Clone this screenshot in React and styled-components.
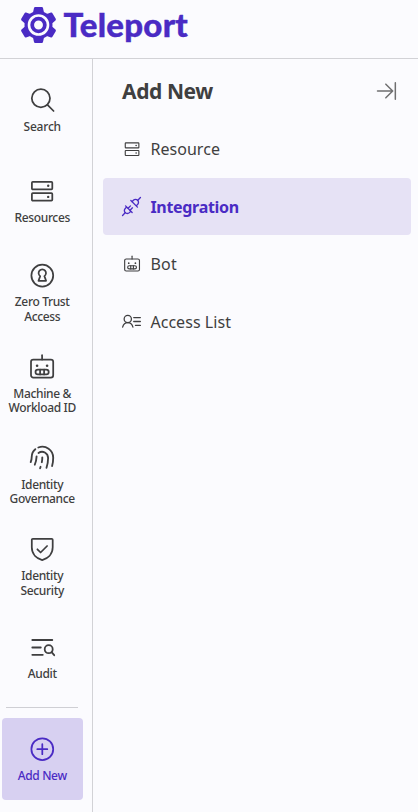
import React from "react";
import styled, { createGlobalStyle } from "styled-components";

const Global = createGlobalStyle`
  * { box-sizing: border-box; }
  body { margin: 0; background: #fbfbfe; color: #3f3f40; font-family: "Noto Sans", "Open Sans", sans-serif; }
`;

const Page = styled.div`
  height: 812px;
  display: flex;
  flex-direction: column;
  overflow: hidden;
`;

const Header = styled.header`
  height: 59px;
  flex: none;
  display: flex;
  align-items: flex-start;
  padding: 7px 0 0 21px;
  gap: 7.5px;
  border-bottom: 1px solid #d2d2d6;
  color: #4a2bc4;
`;

const Wordmark = styled.span`
  margin-top: -1px;
  font-family: Lato, sans-serif;
  font-weight: 900;
  font-size: 33px;
  line-height: 36px;
  letter-spacing: 0.25px;
  -webkit-text-stroke: 0.4px currentColor;
`;

const Body = styled.div`
  flex: 1;
  display: flex;
  min-height: 0;
`;

const Sidebar = styled.nav`
  width: 93px;
  flex: none;
  border-right: 1px solid #d2d2d6;
  padding: 11px 8px 0 2px;
  display: flex;
  flex-direction: column;
`;

const NavItem = styled.a`
  width: 81px;
  height: 82px;
  flex: none;
  margin-bottom: ${(p) => (p.$active ? 0 : "9.3px")};
  border-radius: 4px;
  display: flex;
  flex-direction: column;
  align-items: center;
  padding-top: ${(p) => p.$top ?? 18}px;
  padding-right: 0.6px;
  color: ${(p) => (p.$active ? "#4a2bc4" : "inherit")};
  background: ${(p) => (p.$active ? "#d7d0f1" : "transparent")};
`;

const NavLabel = styled.span`
  margin-top: 7.7px;
  font-size: 12px;
  line-height: 14.4px;
  font-weight: 500;
  letter-spacing: ${(p) => p.$track ?? -0.35}px;
  text-align: center;
  white-space: pre;
`;

const Divider = styled.hr`
  width: 72px;
  height: 1px;
  margin: -2px 0 10px 4px;
  border: 0;
  flex: none;
  background: #cfcfd4;
`;

const Panel = styled.main`
  flex: 1;
  padding: 14px 7px 0 10px;
`;

const PanelHead = styled.div`
  height: 36px;
  margin-bottom: 11px;
  padding: 0 14px 0 19px;
  display: flex;
  align-items: center;
  justify-content: space-between;
`;

const Title = styled.h1`
  margin: 0;
  font-size: 21px;
  line-height: 32px;
  font-weight: 700;
  letter-spacing: -0.4px;
`;

const MenuRow = styled.a`
  height: 57px;
  margin-bottom: 0.8px;
  padding: ${(p) => (p.$active ? "1px" : 0)} 0 0 18px;
  border-radius: 4px;
  display: flex;
  align-items: center;
  gap: 8.4px;
  font-size: 16px;
  font-weight: ${(p) => (p.$active ? 700 : 400)};
  letter-spacing: ${(p) => p.$track}px;
  color: ${(p) => (p.$active ? "#4a2bc4" : "inherit")};
  background: ${(p) => (p.$active ? "#e6e2f5" : "transparent")};
`;

const IconSlot = styled.span`
  width: 21px;
  height: 20px;
  display: flex;
  align-items: center;
  justify-content: center;
`;

const Svg = styled.svg`
  display: block;
  flex: none;
  overflow: visible;
  fill: none;
  stroke: currentColor;
  stroke-width: ${(p) => p.$weight ?? 1.75};
  stroke-linecap: round;
  stroke-linejoin: round;
`;

const Collapse = styled.span`
  color: #6f6f70;
`;

const Icon = ({ size = 24, weight, children }) => (
  <Svg width={size} height={size} viewBox="0 0 24 24" $weight={weight}>{children}</Svg>
);

const SearchIcon = () => (
  <Icon><circle cx="10.9" cy="10.3" r="9.1" /><path d="M17.5 16.9l6.1 6.1" /></Icon>
);
const ServerIcon = (p) => (
  <Icon {...p}>
    <rect x="1.9" y="2.9" width="20.4" height="7.5" rx="0.9" />
    <rect x="1.9" y="14.2" width="20.4" height="7.5" rx="0.9" />
    <g fill="currentColor" stroke="none"><circle cx="18.2" cy="6.7" r="1.2" /><circle cx="18.2" cy="17.9" r="1.2" /></g>
  </Icon>
);
const KeyholeIcon = () => (
  <Icon>
    <circle cx="12.3" cy="11.6" r="10.9" />
    <path d="M10.2 12.1a3.7 3.7 0 1 1 4.200 0l1.700 4.700H8.500z" />
  </Icon>
);
const BotIcon = (p) => (
  <Icon {...p}>
    <rect x="1" y="4.500" width="22.200" height="18" rx="2.300" />
    <path d="M12.100.2v4.300" />
    <rect x="5.500" y="14.600" width="13.200" height="4.800" rx="2.400" />
    <path d="M10.100 14.600v4.800M14.100 14.600v4.800" />
    <g fill="currentColor" stroke="none"><circle cx="7.100" cy="10.800" r="1.300" /><circle cx="17.100" cy="10.800" r="1.300" /></g>
  </Icon>
);
const FingerprintIcon = () => (
  <Icon weight={1.850}>
    <path d="M8.300 1.500C15.800-1.300 23.200 4 23.200 11.700c0 3-.300 5.600-1.100 8.300" />
    <path d="M5.300 3.200C2.800 5.200 1.700 7.900 1.700 11c0 2-.400 3.600-1 5.100" />
    <path d="M8.500 6.900c4.200-2.900 9.600 0 9.600 5.200 0 3.200-.500 6.400-1.600 9.700" />
    <path d="M6.600 10.400c-.200 2.900-.500 5.700-1.800 8.300" />
    <path d="M12.300 11.300c0 1.700-.100 3.300-.500 4.900M10.600 20.800l-.500 1.500" />
  </Icon>
);
const ShieldIcon = () => (
  <Icon>
    <path d="M2.800 1.800h18.900a1 1 0 0 1 1 1v7.500c0 7.200-5.300 11.400-10.500 12.800-5.200-1.400-10.400-5.600-10.400-12.800V2.800a1 1 0 0 1 1-1z" />
    <path d="M7.400 12.300l3.200 3.200 6.500-6.500" />
  </Icon>
);
const AuditIcon = () => (
  <Icon weight={1.800}>
    <path d="M2.300 4h20M2.300 11.500h8.500M2.300 18.800h10.500" />
    <circle cx="18.700" cy="13.200" r="4" />
    <path d="M21.600 16.200l2.600 3" />
  </Icon>
);
const PlusIcon = () => (
  <Icon><circle cx="12.300" cy="12.200" r="10.900" /><path d="M12.300 7.200v10M7.300 12.200h10" /></Icon>
);
const PlugsIcon = () => (
  <Icon size={19} weight={1.700}>
    <path d="M23.300.7l-3.600 3.600M.7 23.300l3.600-3.600" />
    <path d="M11.200 4.500l8.300 8.300M12.600 5.900l1.800-1.800a3.700 3.700 0 0 1 5.300 0 3.700 3.700 0 0 1 0 5.300l-1.800 1.800" />
    <path d="M4.500 11.200l8.300 8.300M5.900 12.600l-1.800 1.800a3.700 3.700 0 0 0 0 5.300 3.700 3.700 0 0 0 5.300 0l1.800-1.800" />
    <path d="M7.700 14.200l3-3M10.200 16.700l3-3" />
  </Icon>
);
const UserListIcon = () => (
  <Icon size={19} weight={1.600}>
    <circle cx="7.300" cy="8.800" r="4.600" />
    <path d="M.800 19c.900-3.400 3.200-5.600 6.500-5.600s5.600 2.200 6.500 5.600M14.800 7h8.400M14.800 12h8.400M17 17h6.200" />
  </Icon>
);
const CollapseIcon = () => (
  <Icon size={20} weight={1.800}><path d="M.600 12h17.500M10.600 3.800l8.200 8.200-8.200 8.200M22 2v20" /></Icon>
);

const teeth = [0, 60, 120, 180, 240, 300];
const Gear = () => (
  <Svg width="35" height="36" viewBox="-17.500 -18 35 36">
    <g fill="currentColor" stroke="none">
      {teeth.map((a) => (
        <path key={a} transform={`rotate(${a})`} d="M-5.600-12L-4.500-17Q-4.300-18-3.300-18H3.300Q4.300-18 4.500-17L5.600-12z" />
      ))}
      <circle r="14" />
    </g>
    <circle r="9.500" stroke="#fbfbfe" strokeWidth="2.600" />
    <circle r="5.300" fill="#fbfbfe" stroke="none" />
    <circle r="5.800" strokeWidth="2.700" />
  </Svg>
);

const navItems = [
  { label: "Search", icon: SearchIcon, track: -0.2 },
  { label: "Resources", icon: ServerIcon },
  { label: "Zero Trust\nAccess", icon: KeyholeIcon, top: 11 },
  { label: "Machine &\nWorkload ID", icon: BotIcon, top: 11 },
  { label: "Identity\nGovernance", icon: FingerprintIcon, top: 11 },
  { label: "Identity\nSecurity", icon: ShieldIcon, top: 11 },
  { label: "Audit", icon: AuditIcon },
];

const menuItems = [
  { label: "Resource", icon: ServerIcon, track: 0.05, size: 16 },
  { label: "Integration", icon: PlugsIcon, track: -0.3, active: true },
  { label: "Bot", icon: BotIcon, track: 0.3, size: 16 },
  { label: "Access List", icon: UserListIcon, track: 0.05 },
];

export default function App() {
  return (
    <Page>
      <Global />
      <Header><Gear /><Wordmark>Teleport</Wordmark></Header>
      <Body>
        <Sidebar>
          {navItems.map(({ label, icon: Glyph, top, track }) => (
            <NavItem key={label} $top={top}>
              <Glyph />
              <NavLabel $track={track}>{label}</NavLabel>
            </NavItem>
          ))}
          <Divider />
          <NavItem $active $top={19}>
            <PlusIcon />
            <NavLabel>Add New</NavLabel>
          </NavItem>
        </Sidebar>
        <Panel>
          <PanelHead><Title>Add New</Title><Collapse><CollapseIcon /></Collapse></PanelHead>
          {menuItems.map(({ label, icon: Glyph, track, active, size }) => (
            <MenuRow key={label} $track={track} $active={active}>
              <IconSlot>
                {size ? <Glyph size={size} weight={1.700} /> : <Glyph />}
              </IconSlot>
              {label}
            </MenuRow>
          ))}
        </Panel>
      </Body>
    </Page>
  );
}
